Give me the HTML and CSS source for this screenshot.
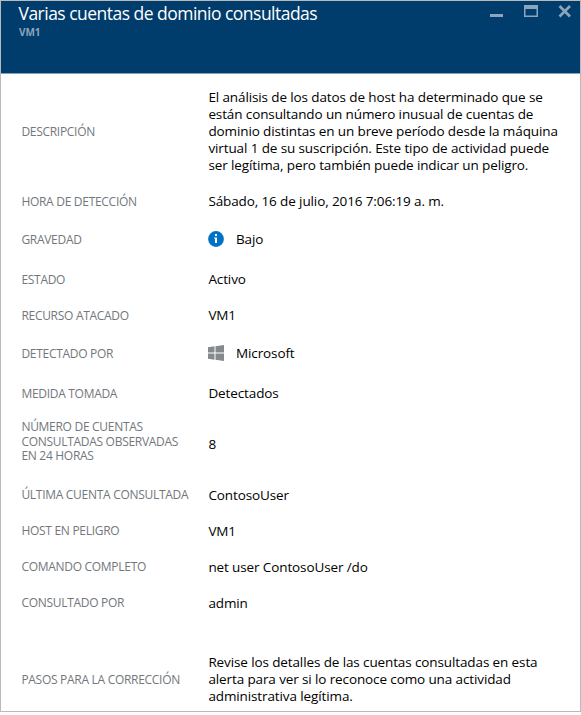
FILE: index.html
```html
<!DOCTYPE html>
<html lang="es">
<head>
<meta charset="utf-8">
<title>Varias cuentas de dominio consultadas</title>
<link rel="stylesheet" href="styles.css">
</head>
<body>
<main class="blade">
  <header class="header">
    <div>
      <h1 class="title">Varias cuentas de dominio consultadas</h1>
      <p class="subtitle">VM1</p>
    </div>
    <svg class="controls" width="84" height="18" viewBox="0 0 84 18">
      <path d="M0 14.500h13" stroke="#8ca4bd" stroke-width="3"/>
      <path d="M34 4h14v12H34zM35.500 8v6.500h11V8z" fill="#8ca4bd" fill-rule="evenodd"/>
      <path d="M69.500 5l10.500 10.500M80 5l-10.500 10.500" stroke="#8ca4bd" stroke-width="2.700"/>
    </svg>
  </header>
  <dl class="details">
    <div class="row"><dt>DESCRIPCIÓN</dt><dd>El análisis de los datos de host ha determinado que se<br>están consultando un número inusual de cuentas de<br>dominio distintas en un breve período desde la máquina<br>virtual 1 de su suscripción. Este tipo de actividad puede<br>ser legítima, pero también puede indicar un peligro.</dd></div>
    <div class="row hour"><dt>HORA DE DETECCIÓN</dt><dd>Sábado, 16 de julio, 2016 7:06:19 a. m.</dd></div>
    <div class="row severity"><dt>GRAVEDAD</dt><dd class="with-icon"><svg width="16" height="16" viewBox="0 0 16 16"><circle cx="8" cy="8" r="7.900" fill="#0072c6"/><path d="M7 3h2v2H7zM6 6.500h3V12H7V7.500H6z" fill="#fff"/></svg>Bajo</dd></div>
    <div class="row state"><dt>ESTADO</dt><dd>Activo</dd></div>
    <div class="row resource"><dt>RECURSO ATACADO</dt><dd>VM1</dd></div>
    <div class="row detected"><dt>DETECTADO POR</dt><dd class="with-icon"><svg width="16" height="16" viewBox="0 0 16 16"><path d="M0 2.200L6.500 1.300V7.500H0zM7.500 1.200L16 0V7.500H7.500zM0 8.500H6.500V14.700L0 13.800zM7.500 8.500H16V16L7.500 14.800z" fill="#85898e"/></svg>Microsoft</dd></div>
    <div class="row action"><dt>MEDIDA TOMADA</dt><dd>Detectados</dd></div>
    <div class="row count"><dt>NÚMERO DE CUENTAS<br>CONSULTADAS OBSERVADAS<br>EN 24 HORAS</dt><dd>8</dd></div>
    <div class="row last"><dt>ÚLTIMA CUENTA CONSULTADA</dt><dd>ContosoUser</dd></div>
    <div class="row host"><dt>HOST EN PELIGRO</dt><dd>VM1</dd></div>
    <div class="row command"><dt>COMANDO COMPLETO</dt><dd>net user ContosoUser /do</dd></div>
    <div class="row by"><dt>CONSULTADO POR</dt><dd>admin</dd></div>
    <div class="row steps"><dt>PASOS PARA LA CORRECCIÓN</dt><dd>Revise los detalles de las cuentas consultadas en esta<br>alerta para ver si lo reconoce como una actividad<br>administrativa legítima.</dd></div>
  </dl>
</main>
</body>
</html>
```
FILE: styles.css
```css
* { box-sizing: border-box; }
body { margin: 0; background: #fff; font-family: "Open Sans", "Noto Sans", sans-serif; overflow: hidden; }
.blade { width: 581px; height: 712px; border: 1px solid #bababa; background: #fff; }
.header { display: flex; justify-content: space-between; height: 73px; padding: 0 6px 0 17.500px; background: #003c6c; border-bottom: 1px solid #8aa0b4; }
.title { margin: 1px 0 0; font-size: 17.500px; line-height: 23px; font-weight: 400; letter-spacing: -0.520px; color: #fff; white-space: nowrap; }
.subtitle { margin: 1px 0 0 0.500px; font-size: 10px; line-height: 13px; font-weight: 700; letter-spacing: -0.100px; color: #8ca4bd; }
.controls { flex: none; }
.details { margin: 0; padding-top: 15px; }
.row { display: grid; grid-template-columns: 187px 1fr; align-items: center; padding-left: 20.400px; white-space: nowrap; }
dt { padding-top: 1px; font-size: 12px; line-height: 14.500px; letter-spacing: -0.290px; color: #73777c; }
dd { margin: 0; font-size: 13.500px; line-height: 17px; letter-spacing: -0.115px; color: #000; }
.with-icon { display: flex; align-items: center; gap: 12px; }
.with-icon svg { margin: -1px 0 1px -0.400px; }
.hour, .resource { margin-top: 19px; }
.severity, .detected { margin-top: 21px; }
.state, .action { margin-top: 23px; }
.count { margin-top: 18px; }
.count dt { padding: 0 0 1px; }
.count dd { padding-top: 4px; }
.last { margin-top: 22px; }
.host, .command, .by { margin-top: 19px; }
.host dt { padding-top: 0; }
.steps { margin-top: 42px; }
.steps dt { padding-top: 3px; }
```
